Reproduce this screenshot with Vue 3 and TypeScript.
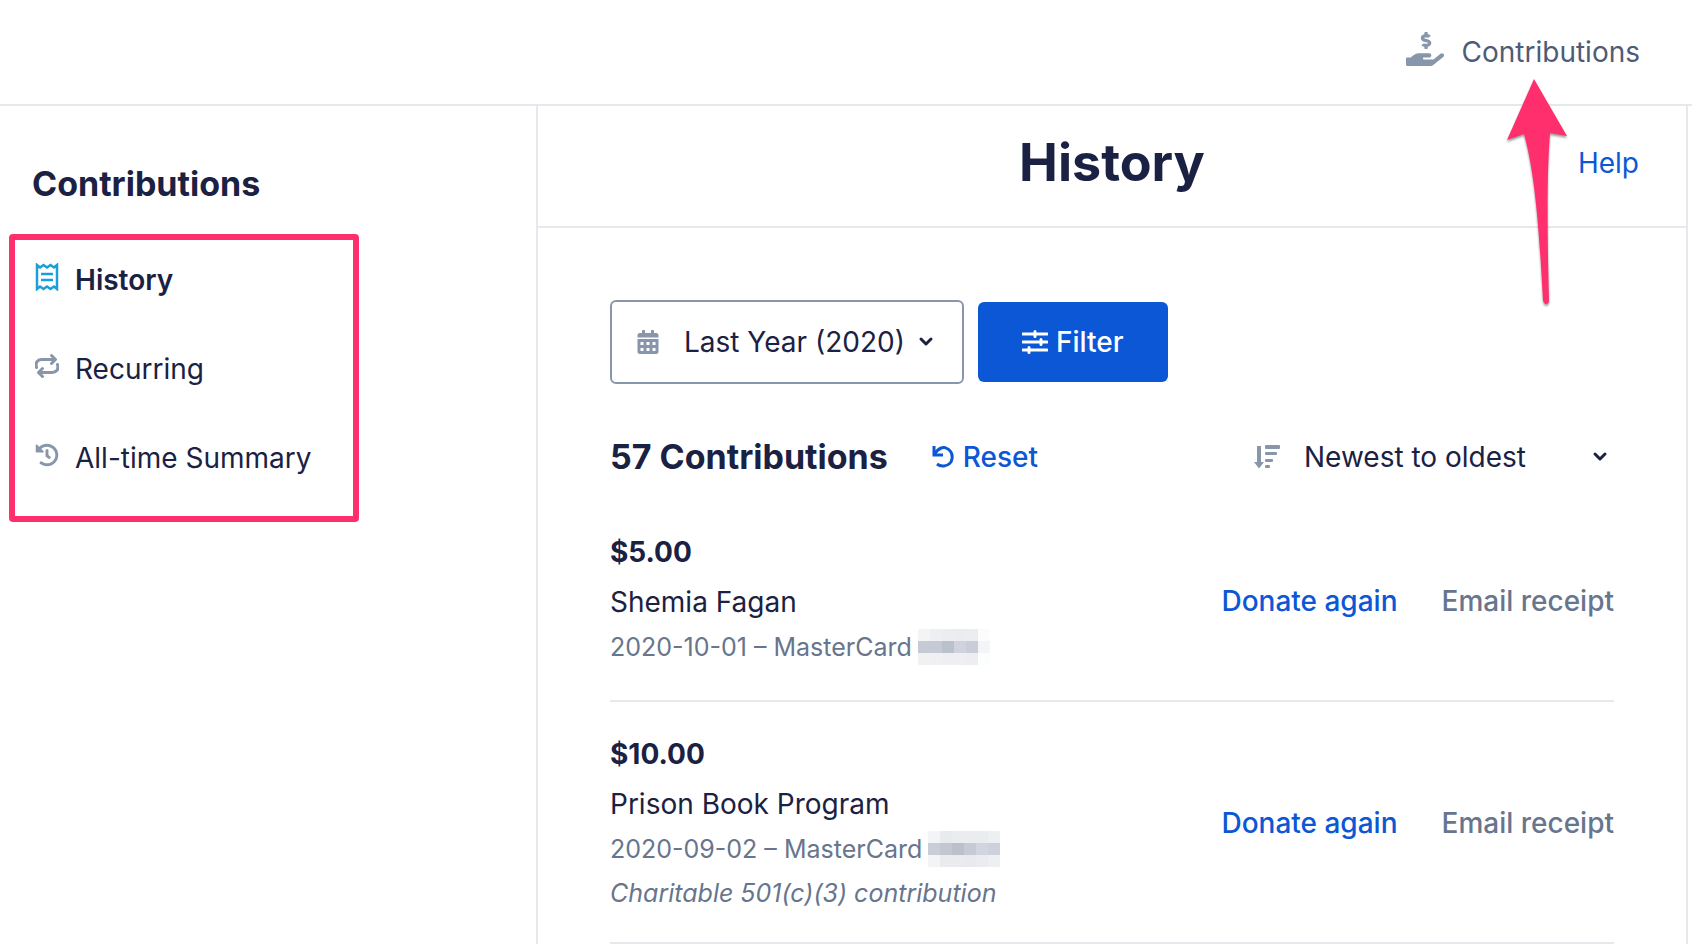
<script setup lang="ts">
import { ref } from 'vue'

interface NavItem {
  id: string
  label: string
}

interface Contribution {
  amount: string
  recipient: string
  detail: string
  note?: string
  mask: string[][]
}

const navItems: NavItem[] = [
  { id: 'history', label: 'History' },
  { id: 'recurring', label: 'Recurring' },
  { id: 'summary', label: 'All-time Summary' },
]
const current = ref('history')
const year = ref('Last Year (2020)')
const order = ref('Newest to oldest')

const contributions: Contribution[] = [
  {
    amount: '$5.00',
    recipient: 'Shemia Fagan',
    detail: '2020-10-01 – MasterCard',
    mask: [
      ['#f3f4f6', '#eeeff2', '#ecedf1', '#ebecf0', '#ecedf1', '#fcfcfd'],
      ['#c6cad4', '#c6cad4', '#bac1cb', '#d0d3dd', '#cacdd7', '#f4f5f8'],
      ['#f1f1f4', '#f0f0f3', '#eeeff2', '#efeff3', '#edeef2', '#fcfdfd'],
    ],
  },
  {
    amount: '$10.00',
    recipient: 'Prison Book Program',
    detail: '2020-09-02 – MasterCard',
    note: 'Charitable 501(c)(3) contribution',
    mask: [
      ['#f3f4f6', '#e8ebee', '#ebecef', '#ebecef', '#ebecf0', '#eeeff2'],
      ['#c9cdd7', '#c3c7d0', '#bcc0ca', '#c6cad4', '#d2d5df', '#cdd1dc'],
      ['#f3f4f6', '#eaebef', '#eaebef', '#e9eaee', '#ebecf1', '#eeeff1'],
    ],
  },
]
</script>

<template>
  <div class="page">
    <header class="topbar">
      <a href="#contributions" class="top-link">
        <svg class="hand" viewBox="0 0 576 512" aria-hidden="true">
          <path d="M271.06,144.3l54.27,14.3a8.59,8.59,0,0,1,6.63,8.1c0,4.6-4.09,8.4-9.12,8.4h-35.6a30,30,0,0,1-11.19-2.2c-5.24-2.2-11.28-1.7-15.3,2l-19,17.5a11.68,11.68,0,0,0-2.25,2.66,11.42,11.42,0,0,0,3.88,15.74,83.77,83.77,0,0,0,34.51,11.5V240c0,8.8,7.83,16,17.37,16h17.37c9.55,0,17.38-7.2,17.38-16V222.4c32.93-3.6,57.84-31,53.5-63-3.15-23-22.46-41.3-46.56-47.7L282.68,97.4a8.59,8.59,0,0,1-6.63-8.1c0-4.6,4.09-8.4,9.12-8.4h35.6A30,30,0,0,1,332,83.1c5.23,2.2,11.28,1.7,15.3-2l19-17.5A11.31,11.31,0,0,0,368.47,61a11.43,11.43,0,0,0-3.84-15.78,83.82,83.82,0,0,0-34.52-11.5V16c0-8.8-7.82-16-17.37-16H295.37C285.82,0,278,7.2,278,16V33.6c-32.89,3.6-57.85,31-53.51,63C227.63,119.6,247,137.9,271.06,144.3ZM565.27,328.1c-11.8-10.7-30.2-10-42.6,0L430.27,402a63.64,63.64,0,0,1-40,14H272a16,16,0,0,1,0-32h78.29c15.9,0,30.71-10.9,33.25-26.6a31.2,31.2,0,0,0,.46-5.46A32,32,0,0,0,352,320H192a117.66,117.66,0,0,0-74.1,26.29L71.4,384H16A16,16,0,0,0,0,400v96a16,16,0,0,0,16,16H372.77a64,64,0,0,0,40-14L564,377a32,32,0,0,0,1.28-48.9Z" />
        </svg>
        Contributions
      </a>
      <svg class="pointer" viewBox="0 0 64 232" aria-hidden="true">
        <path d="M28 3 L61 60 L44 57 C41 95 41 150 43 224 Q43 228 40 228 Q38 228 37 224 C33 150 29 98 18 58 L1 64 Z" />
      </svg>
    </header>

    <div class="body">
      <aside class="sidebar">
        <h2 class="side-title">Contributions</h2>
        <nav class="side-nav" aria-label="Contributions">
          <a
            v-for="item in navItems"
            :key="item.id"
            :href="'#' + item.id"
            class="nav-item"
            :class="{ active: current === item.id }"
            @click="current = item.id"
          >
            <svg v-if="item.id === 'history'" class="nav-icon receipt" viewBox="0 0 24 28" aria-hidden="true">
              <path d="M2 2 L5 4.500 L8.500 2 L12 4.500 L15.500 2 L19 4.500 L22 2 V26 L19 23.500 L15.500 26 L12 23.500 L8.500 26 L5 23.500 L2 26 Z" />
              <path d="M6 11 H18 M6 17 H18" />
            </svg>
            <svg v-else-if="item.id === 'recurring'" class="nav-icon loop" viewBox="0 0 24 28" aria-hidden="true">
              <path d="M1.500 15.500 C0 10 3 7.500 7 7.500 H20 M16.500 3.500 L20.500 7.500 L16.500 11.500" />
              <path d="M22.500 12.500 C24 18 21 20.500 17 20.500 H4 M7.500 16.500 L3.500 20.500 L7.500 24.500" />
            </svg>
            <svg v-else class="nav-icon clock" viewBox="-8 -42 528 596" aria-hidden="true">
              <path d="M504 255.531c.253 136.64-111.18 248.372-247.82 248.468-59.015.042-113.223-20.53-155.822-54.911-11.077-8.94-11.905-25.541-1.839-35.607l11.267-11.267c8.609-8.609 22.353-9.551 31.891-1.984C173.062 425.135 212.781 440 256 440c101.705 0 184-82.311 184-184 0-101.705-82.311-184-184-184-48.814 0-93.149 18.969-126.068 49.932l50.754 50.754c10.08 10.08 2.941 27.314-11.313 27.314H24c-8.837 0-16-7.163-16-16V38.627c0-14.254 17.234-21.393 27.314-11.314l49.372 49.372C129.209 34.136 189.552 8 256 8c136.81 0 247.747 110.78 248 247.531zm-180.912 78.784l9.823-12.63c8.138-10.463 6.253-25.542-4.21-33.679L288 256.349V152c0-13.255-10.745-24-24-24h-16c-13.255 0-24 10.745-24 24v135.651l65.409 50.874c10.463 8.137 25.541 6.253 33.679-4.21z" />
            </svg>
            {{ item.label }}
          </a>
        </nav>
      </aside>

      <main class="main">
        <div class="main-head">
          <h1>History</h1>
          <a href="#help" class="help">Help</a>
        </div>

        <div class="content">
          <div class="filters">
            <label class="year-box">
              <svg class="calendar" viewBox="0 0 448 512" aria-hidden="true">
                <path fill-rule="evenodd" d="M400 64h-48V16c0-9-7-16-16-16h-32c-9 0-16 7-16 16v48H160V16c0-9-7-16-16-16h-32c-9 0-16 7-16 16v48H48C21 64 0 85 0 112v48h448v-48c0-27-21-48-48-48zM0 192v272c0 27 21 48 48 48h352c27 0 48-21 48-48V192zM64 256h64v64H64zM192 256h64v64h-64zM320 256h64v64h-64zM64 384h64v64H64zM192 384h64v64h-64zM320 384h64v64h-64z" />
              </svg>
              <select v-model="year" aria-label="Year">
                <option>Last Year (2020)</option>
              </select>
              <svg class="chevron" viewBox="0 0 16 12" aria-hidden="true"><path d="M3 3 L8 8 L13 3" /></svg>
            </label>
            <button type="button" class="filter-btn">
              <svg class="sliders" viewBox="0 0 26 24" aria-hidden="true">
                <path d="M1 4 H25 M1 12 H25 M1 20 H25" />
                <path d="M13 1.500 V6.500 M19 9.500 V14.500 M7 17.500 V22.500" />
              </svg>
              Filter
            </button>
          </div>

          <div class="list-head">
            <h2 class="count">57 Contributions</h2>
            <button type="button" class="reset">
              <svg class="undo" viewBox="0 0 22 22" aria-hidden="true">
                <path d="M2 0 V9 H11" />
                <path d="M2.500 8 C7 1 12 1 14 2 C23 6 22 19 12 20 Q8 20.500 5 18" />
              </svg>
              Reset
            </button>
            <label class="sort-box">
              <svg class="sort" viewBox="0 0 26 24" aria-hidden="true">
                <path d="M3 1 H7 V17 H10 L5 23.500 L0 17 H3 Z" />
                <rect x="11" width="15" height="4" y="0" rx="1" />
                <rect x="11" width="12" height="3" y="7" rx="1" />
                <rect x="11" width="8" height="3" y="14" rx="1" />
                <rect x="11" width="5" height="3" y="20" rx="1" />
              </svg>
              <select v-model="order" aria-label="Sort order">
                <option>Newest to oldest</option>
              </select>
              <svg class="chevron" viewBox="0 0 16 12" aria-hidden="true"><path d="M3 3 L8 8 L13 3" /></svg>
            </label>
          </div>

          <ul class="rows">
            <li v-for="c in contributions" :key="c.amount" class="row">
              <div class="info">
                <div class="amount">{{ c.amount }}</div>
                <div class="recipient">{{ c.recipient }}</div>
                <div class="detail">
                  {{ c.detail }}
                  <svg class="mask" viewBox="0 0 6 3" preserveAspectRatio="none" shape-rendering="crispEdges" aria-hidden="true">
                    <template v-for="(line, y) in c.mask" :key="y">
                      <rect v-for="(fill, x) in line" :key="x" :x="x" :y="y" width="1" height="1" :fill="fill" />
                    </template>
                  </svg>
                </div>
                <div v-if="c.note" class="note">{{ c.note }}</div>
              </div>
              <div class="actions">
                <button type="button" class="donate">Donate again</button>
                <button type="button" class="receipt-btn">Email receipt</button>
              </div>
            </li>
          </ul>
        </div>
      </main>
    </div>
  </div>
</template>

<style>
body {
  margin: 0;
  background: #fff;
}
</style>

<style scoped>
.page {
  display: flex;
  flex-direction: column;
  min-height: 100vh;
  font-family: Inter, 'Liberation Sans', sans-serif;
  font-size: 28px;
  line-height: 40px;
  color: #1a2142;
}
a {
  text-decoration: none;
}
svg {
  flex: none;
  fill: currentColor;
}
h1,
h2 {
  margin: 0;
  font-weight: 700;
}
button,
select {
  appearance: none;
  margin: 0;
  padding: 0;
  border: 0;
  background: none;
  color: inherit;
  font: inherit;
  cursor: pointer;
}
.topbar {
  position: relative;
  display: flex;
  justify-content: flex-end;
  align-items: center;
  height: 104px;
  padding-right: 52px;
  border-bottom: 2px solid #e5e9ee;
}
.top-link {
  display: flex;
  align-items: center;
  gap: 18px;
  color: #4f5b76;
}
.hand {
  width: 38px;
  height: 36px;
  margin-bottom: 6px;
  color: #8896ab;
}
.pointer {
  position: absolute;
  top: 76px;
  right: 122px;
  width: 64px;
  height: 232px;
  z-index: 1;
  color: #ff2f6e;
  filter: drop-shadow(0 2px 1px rgba(0, 0, 0, 0.4));
  pointer-events: none;
}
.body {
  display: flex;
  flex: 1;
}
.sidebar {
  box-sizing: border-box;
  width: 538px;
  flex: none;
  padding: 54px 9px 0;
  border-right: 2px solid #e5e9ee;
}
.side-title {
  padding-left: 23px;
  font-size: 34px;
  line-height: 48px;
}
.side-nav {
  display: flex;
  flex-direction: column;
  gap: 49px;
  box-sizing: border-box;
  width: 350px;
  margin-top: 26px;
  padding: 20px 20px 38px;
  border: 6px solid #ff2f6e;
  border-radius: 4px;
}
.nav-item {
  display: flex;
  align-items: center;
  gap: 16px;
  color: inherit;
}
.active {
  font-weight: 600;
}
.nav-icon {
  width: 24px;
  height: 28px;
  margin-bottom: 6px;
  color: #8896ab;
}
.receipt,
.loop {
  fill: none;
  stroke: currentColor;
  stroke-width: 2.5;
}
.receipt {
  color: #1a9fdb;
}
.loop {
  stroke-width: 3;
  stroke-linecap: round;
  stroke-linejoin: round;
}
.main {
  flex: 1;
  margin-right: 4px;
  border-right: 2px solid #e5e9ee;
}
.main-head {
  display: grid;
  grid-template-columns: 1fr auto 1fr;
  align-items: center;
  box-sizing: border-box;
  height: 122px;
  padding: 0 47px 6px;
  border-bottom: 2px solid #e5e9ee;
}
h1 {
  grid-column: 2;
  font-size: 52px;
  line-height: 64px;
}
.help {
  justify-self: end;
  color: #0b57d5;
}
.content {
  padding: 72px 72px 0;
}
.filters {
  display: flex;
  align-items: center;
  gap: 14px;
}
.year-box {
  display: flex;
  align-items: center;
  box-sizing: border-box;
  height: 84px;
  padding: 0 28px 0 25px;
  border: 2px solid #8896ab;
  border-radius: 6px;
}
.calendar {
  width: 22px;
  height: 24px;
  margin-right: 25px;
  color: #8896ab;
}
.chevron {
  width: 16px;
  height: 12px;
  fill: none;
  stroke: currentColor;
  stroke-width: 3;
  stroke-linecap: round;
  stroke-linejoin: round;
}
.year-box .chevron {
  margin-left: 13px;
}
.filter-btn {
  display: flex;
  align-items: center;
  gap: 8px;
  height: 80px;
  padding: 0 44px;
  border-radius: 6px;
  background: #0b57d5;
  color: #fff;
  font-weight: 500;
}
.sliders {
  width: 26px;
  height: 24px;
  fill: none;
  stroke: currentColor;
  stroke-width: 3;
  stroke-linecap: round;
}
.list-head {
  display: flex;
  align-items: center;
  height: 48px;
  margin-top: 49px;
}
.count {
  font-size: 34px;
  line-height: 48px;
}
.reset {
  display: flex;
  align-items: center;
  gap: 9px;
  margin-left: 44px;
  color: #0b57d5;
  font-weight: 500;
}
.undo {
  width: 22px;
  height: 22px;
  fill: none;
  stroke: currentColor;
  stroke-width: 3;
}
.sort-box {
  display: flex;
  align-items: center;
  width: 360px;
  margin-left: auto;
}
.sort {
  width: 26px;
  height: 24px;
  margin-right: 24px;
  color: #8896ab;
}
.sort-box .chevron {
  margin-left: auto;
  margin-right: 6px;
}
.rows {
  margin: 19px 0 0;
  padding: 0;
  list-style: none;
}
.row {
  display: flex;
  justify-content: space-between;
  align-items: center;
  padding: 23px 0 29px;
  border-bottom: 2px solid #e5e9ee;
}
.amount {
  line-height: 58px;
  font-weight: 700;
}
.recipient {
  line-height: 42px;
}
.detail,
.note {
  font-size: 25px;
  line-height: 40px;
  color: #67758d;
}
.detail {
  display: flex;
  align-items: center;
  gap: 6px;
  line-height: 48px;
}
.note {
  font-style: italic;
}
.mask {
  width: 72px;
  height: 36px;
}
.actions {
  display: flex;
  gap: 44px;
  padding-top: 8px;
  font-weight: 500;
}
.donate {
  color: #0b57d5;
}
.receipt-btn {
  color: #67758d;
}
</style>
